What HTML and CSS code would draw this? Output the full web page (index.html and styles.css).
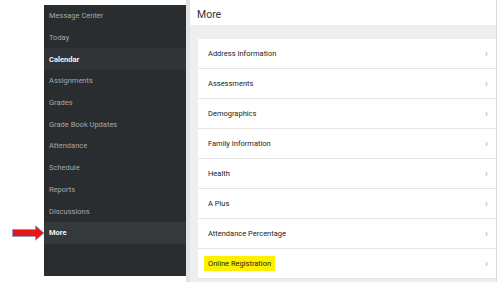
FILE: index.html
```html
<!DOCTYPE html>
<html lang="en">

<head>
  <meta charset="UTF-8" />
  <meta name="viewport" content="width=device-width, initial-scale=1.0" />
  <title>More - Campus Portal</title>
  <link rel="stylesheet" href="styles.css">
</head>

<body>
  <div class="page">
    <!-- 左侧导航 -->
    <nav class="sidebar">
      <a class="side-link">Message Center</a>
      <a class="side-link">Today</a>
      <a class="side-link active">Calendar</a>
      <a class="side-link">Assignments</a>
      <a class="side-link">Grades</a>
      <a class="side-link">Grade Book Updates</a>
      <a class="side-link">Attendance</a>
      <a class="side-link">Schedule</a>
      <a class="side-link">Reports</a>
      <a class="side-link">Discussions</a>
      <a class="side-link current">
        More
        <svg class="pointer-arrow" width="33" height="16" viewBox="0 0 33 16">
          <path d="M0.5 4.5 H23.5 V0.8 L32 8 L23.5 15.2 V11.5 H0.5 Z" fill="#e8141b" stroke="#7a9fd6" stroke-width="0.8"/>
        </svg>
      </a>
    </nav>

    <div class="main">
      <div class="page-title">More</div>
      <div class="content">
        <ul class="more-list">
          <li class="more-item">Address Information <span class="chevron">&#x203A;</span></li>
          <li class="more-item">Assessments <span class="chevron">&#x203A;</span></li>
          <li class="more-item">Demographics <span class="chevron">&#x203A;</span></li>
          <li class="more-item">Family Information <span class="chevron">&#x203A;</span></li>
          <li class="more-item">Health <span class="chevron">&#x203A;</span></li>
          <li class="more-item">A Plus <span class="chevron">&#x203A;</span></li>
          <li class="more-item">Attendance Percentage <span class="chevron">&#x203A;</span></li>
          <li class="more-item"><span class="highlight">Online Registration</span> <span class="chevron">&#x203A;</span></li>
        </ul>
      </div>
    </div>
  </div>
</body>

</html>
```

FILE: styles.css
```css
body {
  font-family: Roboto, 'Liberation Sans', sans-serif;
  margin: 0;
  padding: 0;
  background-color: #ffffff;
  width: 500px;
  height: 282px;
  overflow: hidden;
}

.page {
  display: flex;
  padding-left: 44px;
  height: 282px;
}

.sidebar {
  width: 142px;
  margin-top: 5px;
  height: 271px;
  background: #2a2d30;
  display: flex;
  flex-direction: column;
}

.side-link {
  position: relative;
  display: flex;
  align-items: center;
  height: 21.7px;
  padding-left: 5px;
  color: #a4a7aa;
  font-size: 7.5px;
  text-decoration: none;
}

.side-link.active {
  background: #303437;
  color: #f2f2f2;
  font-weight: 700;
}

.side-link.current {
  background: #35393c;
  color: #f2f2f2;
  font-weight: 700;
}

/* 标注箭头 */
.pointer-arrow {
  position: absolute;
  left: -32px;
  top: 3px;
}

.main {
  width: 306px;
  border-left: 4px solid #e3e3e3;
  border-right: 1px solid #dcdcdc;
  display: flex;
  flex-direction: column;
}

.page-title {
  height: 22px;
  margin-top: 3px;
  padding-left: 7px;
  font-size: 10.5px;
  color: #333;
  display: flex;
  align-items: center;
}

.content {
  flex: 1;
  background: #eeeeee;
  padding: 14px 0 0 8px;
}

.more-list {
  list-style: none;
  margin: 0;
  padding: 0;
  background: white;
}

.more-item {
  height: 30px;
  box-sizing: border-box;
  border-bottom: 1px solid #e6e6e6;
  display: flex;
  align-items: center;
  justify-content: space-between;
  padding: 0 8px 0 10px;
  font-size: 7.5px;
  color: #222;
}

.highlight {
  background: #ffef00;
  margin-left: -4px;
  padding: 3px 4px;
}

.chevron {
  color: #b5b5b5;
  font-size: 11px;
}
```
